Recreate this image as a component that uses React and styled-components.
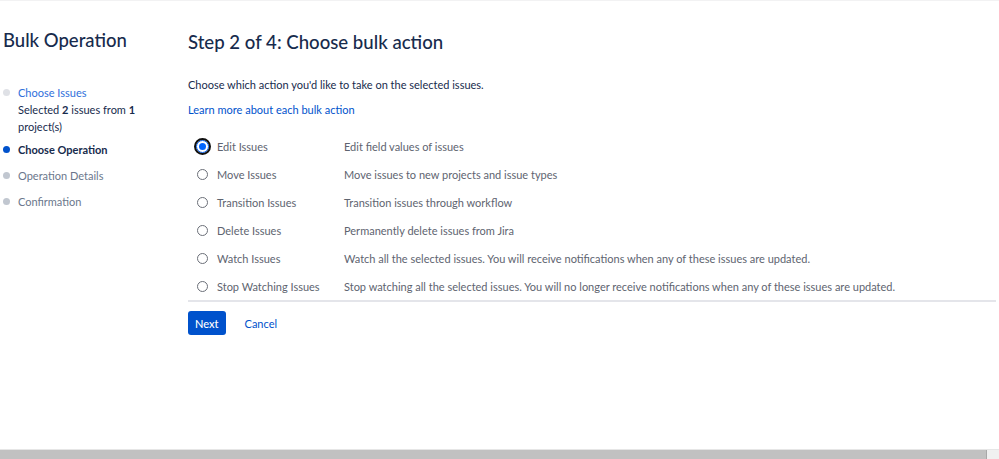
import React, { useState } from 'react';
import styled, { createGlobalStyle } from 'styled-components';

const GlobalStyle = createGlobalStyle`
  html, body {
    margin: 0;
    padding: 0;
    background: #fff;
  }
  body {
    font-family: Lato, "Noto Sans", sans-serif;
    color: #172b4d;
  }
`;

const steps = [
  { label: 'Choose Issues', state: 'done' },
  { label: 'Choose Operation', state: 'current' },
  { label: 'Operation Details', state: 'todo' },
  { label: 'Confirmation', state: 'todo' },
];

const operations = [
  { id: 'edit', label: 'Edit Issues', desc: 'Edit field values of issues' },
  { id: 'move', label: 'Move Issues', desc: 'Move issues to new projects and issue types' },
  { id: 'transition', label: 'Transition Issues', desc: 'Transition issues through workflow' },
  { id: 'delete', label: 'Delete Issues', desc: 'Permanently delete issues from Jira' },
  { id: 'watch', label: 'Watch Issues', desc: 'Watch all the selected issues. You will receive notifications when any of these issues are updated.' },
  { id: 'unwatch', label: 'Stop Watching Issues', desc: 'Stop watching all the selected issues. You will no longer receive notifications when any of these issues are updated.' },
];

const Page = styled.div`
  height: 459px;
  display: flex;
  flex-direction: column;
  border-top: 1px solid #f2f2f3;
  box-sizing: border-box;
  overflow: hidden;
`;

const Body = styled.div`
  flex: 1;
  display: flex;
`;

const Sidebar = styled.nav`
  width: 188px;
  flex-shrink: 0;
  padding: 27px 30px 0 3px;
  box-sizing: border-box;
`;

const Title = styled.h1`
  margin: 0;
  font-size: 18.5px;
  font-weight: 500;
  line-height: 24px;
  color: #172b4d;
  white-space: nowrap;
`;

const StepList = styled.ol`
  list-style: none;
  margin: 32px 0 0;
  padding: 0;
  display: flex;
  flex-direction: column;
  gap: 9px;
`;

const Step = styled.li`
  position: relative;
  padding-left: 15px;
  font-size: 11px;
  line-height: 17px;
  font-weight: ${(p) => (p.$state === 'current' ? 700 : 400)};
  color: ${(p) => (p.$state === 'todo' ? '#6b778c' : '#172b4d')};

  &::before {
    content: '';
    position: absolute;
    left: 0;
    top: 5px;
    width: 7px;
    height: 7px;
    border-radius: 50%;
    background: ${(p) => (p.$state === 'current' ? '#0052cc' : p.$state === 'done' ? '#dfe1e6' : '#c1c7d0')};
  }
`;

const StepLink = styled.a`
  color: #2f6fdb;
  text-decoration: none;
`;

const StepNote = styled.div`
  font-weight: 400;
  color: #172b4d;
  margin-bottom: -3px;
  b { font-weight: 700; }
`;

const Main = styled.main`
  flex: 1;
  padding: 28px 3px 0 0;
`;

const Heading = styled.h2`
  margin: 0;
  font-size: 18.6px;
  font-weight: 500;
  line-height: 26px;
  color: #172b4d;
`;

const Intro = styled.p`
  margin: 22px 0 0;
  font-size: 11px;
  line-height: 16px;
  color: #172b4d;
`;

const LearnLink = styled.a`
  display: inline-block;
  margin-top: 9px;
  font-size: 11px;
  line-height: 16px;
  color: #0052cc;
  text-decoration: none;
`;

const OptionList = styled.div`
  margin-top: 14px;
  border-bottom: 2px solid #e4e5ea;
`;

const OptionRow = styled.label`
  display: grid;
  grid-template-columns: 29px 127px 1fr;
  align-items: center;
  height: 28px;
  font-size: 11px;
  color: #5e6470;
  cursor: pointer;
`;

const RadioWrap = styled.span`
  display: flex;
  justify-content: center;
`;

const Radio = styled.span`
  width: 11px;
  height: 11px;
  border-radius: 50%;
  box-sizing: border-box;
  border: 1px solid #6b6f78;
  display: flex;
  align-items: center;
  justify-content: center;
  background: #fff;

  ${(p) => p.$checked && `
    width: 13px;
    height: 13px;
    border: 1.5px solid #0065ff;
    outline: 2px solid #101010;
    outline-offset: 0px;
    &::after {
      content: '';
      width: 7px;
      height: 7px;
      border-radius: 50%;
      background: #0065ff;
    }
  `}
`;

const Actions = styled.div`
  display: flex;
  align-items: center;
  gap: 19px;
  margin-top: 9px;
`;

const PrimaryButton = styled.button`
  height: 24px;
  padding: 0 7px;
  border: none;
  border-radius: 3px;
  background: #0052cc;
  color: #fff;
  font-family: inherit;
  font-size: 11px;
  font-weight: 500;
`;

const TextButton = styled.button`
  border: none;
  background: none;
  padding: 0;
  color: #0052cc;
  font-family: inherit;
  font-size: 11px;
`;

const Scrollbar = styled.div`
  height: 9px;
  display: flex;
  border-top: 1px solid #e6e6e6;
`;

const Thumb = styled.div`
  flex: 1;
  background: #c1c1c1;
`;

const Corner = styled.div`
  width: 12px;
  background: #f0f0f0;
  border-left: 1px solid #a8a8a8;
`;

export default function App() {
  const [selected, setSelected] = useState('edit');

  return (
    <Page>
      <GlobalStyle />
      <Body>
        <Sidebar>
          <Title>Bulk Operation</Title>
          <StepList>
            {steps.map((s) => (
              <Step key={s.label} $state={s.state}>
                {s.state === 'done' ? (
                  <>
                    <StepLink href="#">{s.label}</StepLink>
                    <StepNote>
                      Selected <b>2</b> issues from <b>1</b> project(s)
                    </StepNote>
                  </>
                ) : s.label}
              </Step>
            ))}
          </StepList>
        </Sidebar>
        <Main>
          <Heading>Step 2 of 4: Choose bulk action</Heading>
          <Intro>Choose which action you'd like to take on the selected issues.</Intro>
          <LearnLink href="#">Learn more about each bulk action</LearnLink>
          <OptionList>
            {operations.map((op) => (
              <OptionRow key={op.id} onClick={() => setSelected(op.id)}>
                <RadioWrap>
                  <Radio $checked={selected === op.id} />
                </RadioWrap>
                <span>{op.label}</span>
                <span>{op.desc}</span>
              </OptionRow>
            ))}
          </OptionList>
          <Actions>
            <PrimaryButton>Next</PrimaryButton>
            <TextButton>Cancel</TextButton>
          </Actions>
        </Main>
      </Body>
      <Scrollbar>
        <Thumb />
        <Corner />
      </Scrollbar>
    </Page>
  );
}
